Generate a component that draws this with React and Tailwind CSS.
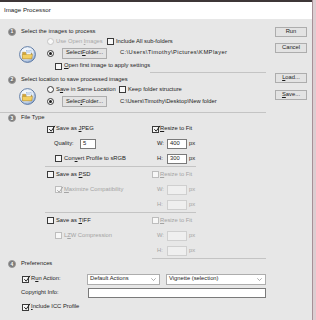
import React from "react";

function Check({ checked = false, disabled = false }) {
  return (
    <span
      className={`relative inline-flex w-[7px] h-[7px] shrink-0 border ${
        disabled ? "border-[#bdbdbd]" : "border-[#3a3a3a]"
      } bg-[#f7f7f7]`}
    >
      {checked && (
        <svg
          viewBox="0 0 8 8"
          className="absolute left-[-0.5px] top-[-1.5px] w-[8px] h-[8px] overflow-visible"
        >
          <path
            d="M1.3 4.2 L3.2 6.2 L7 0.8"
            stroke={disabled ? "#a9a9a9" : "#222"}
            strokeWidth="1"
            fill="none"
          />
        </svg>
      )}
    </span>
  );
}

function Radio({ checked = false, disabled = false }) {
  return (
    <span
      className={`inline-flex items-center justify-center w-[7px] h-[7px] shrink-0 rounded-full border ${
        disabled ? "border-[#c6c6c6]" : "border-[#3a3a3a]"
      } bg-[#f9f9f9]`}
    >
      {checked && <span className="w-[3px] h-[3px] rounded-full bg-[#1e1e1e]" />}
    </span>
  );
}

function Step({ n }) {
  return (
    <span className="flex items-center justify-center w-[8px] h-[8px] shrink-0 rounded-full bg-[#777777] border border-[#9a9a9a] text-white text-[5px] font-bold leading-none">
      {n}
    </span>
  );
}

function Btn({ children, className = "" }) {
  return (
    <span
      className={`flex items-center justify-center border border-[#adadad] bg-[#e3e3e3] leading-none ${className}`}
    >
      {children}
    </span>
  );
}

function FolderIcon({ id }) {
  return (
    <svg width="17" height="17" viewBox="0 0 17 17">
      <defs>
        <radialGradient id={`disc${id}`} cx="40%" cy="35%" r="70%">
          <stop offset="0" stopColor="#ffffff" />
          <stop offset="0.6" stopColor="#e4ecf6" />
          <stop offset="1" stopColor="#7e9dc9" />
        </radialGradient>
      </defs>
      <circle cx="8.5" cy="8.5" r="7.9" fill={`url(#disc${id})`} stroke="#55739f" strokeWidth="0.9" />
      <path d="M3.6 6.2 H6.6 L7.5 7.1 H12.8 V12.6 H3.6 Z" fill="#d7a93a" stroke="#9b7420" strokeWidth="0.4" />
      <rect x="7.2" y="4.2" width="4.8" height="5.2" fill="#ffffff" stroke="#7aa0cf" strokeWidth="0.4" />
      <path d="M8 5.6 H11.2 M8 6.6 H11.2" stroke="#6f9ad0" strokeWidth="0.4" />
      <path d="M3.2 8.4 H13.6 L12.6 12.8 H3.6 Z" fill="#f2cf63" stroke="#a98222" strokeWidth="0.4" />
    </svg>
  );
}

function Field({ value = "", disabled = false, className = "" }) {
  return (
    <span
      className={`flex items-center h-[10px] px-[2px] border leading-none ${
        disabled ? "border-[#cfcfcf] bg-[#efefef]" : "border-[#7a7a7a] bg-white"
      } ${className}`}
    >
      {value}
    </span>
  );
}

function Select({ value, className = "" }) {
  return (
    <span
      className={`flex items-center justify-between h-[11px] pl-[2px] pr-[3px] border border-[#adadad] bg-white leading-none ${className}`}
    >
      <span>{value}</span>
      <svg width="5" height="3" viewBox="0 0 5 3">
        <path d="M0.3 0.3 L2.5 2.5 L4.7 0.3" stroke="#777" strokeWidth="0.6" fill="none" />
      </svg>
    </span>
  );
}

function SizeRow({ label, value, disabled }) {
  return (
    <div className="flex items-center pl-[5px]">
      <span className={`w-[10px] ${disabled ? "text-[#a3a3a3]" : ""}`}>{label}</span>
      <Field value={value} disabled={disabled} className="w-[20px]" />
      <span className={`ml-[2px] ${disabled ? "text-[#a3a3a3]" : ""}`}>px</span>
    </div>
  );
}

function ResizeRow({ checked, disabled }) {
  return (
    <div className="flex items-center">
      <Check checked={checked} disabled={disabled} />
      <span className={`ml-[1px] ${disabled ? "text-[#a3a3a3]" : ""}`}>
        <span className="underline">R</span>esize to Fit
      </span>
    </div>
  );
}

export default function App() {
  return (
    <div className="w-[316px] h-[320px] flex overflow-hidden bg-[#dccdd1] font-['Liberation_Sans',Arial,sans-serif] text-[5.8px] text-[#1c1c1c] leading-none">
      <div className="w-[312px] flex flex-col border-t-2 border-[#3e3637] bg-[#e7e7e7]">
        {/* title bar */}
        <div className="h-[17px] shrink-0 bg-white flex items-center pl-[4px] text-[6.2px] text-[#222]">
          Image Processor
        </div>

        <div className="flex flex-1">
          {/* left content */}
          <div className="w-[270px] flex flex-col">
            {/* Section 1 */}
            <div className="mt-[8px] h-[9px] flex items-center pl-[8px] gap-[5px]">
              <Step n="1" />
              <span>Select the images to process</span>
            </div>
            <div className="flex pl-[19px]">
              <div className="w-[28px] flex items-center pt-[1px]">
                <FolderIcon id="a" />
              </div>
              <div className="flex flex-col">
                <div className="h-[11px] flex items-center">
                  <Radio disabled />
                  <span className="ml-[2px] w-[51px] text-[#a8a8a8]">
                    Use Open <span className="underline">I</span>mages
                  </span>
                  <Check />
                  <span className="ml-[2px]">Include All sub-folders</span>
                </div>
                <div className="h-[12px] flex items-center">
                  <Radio checked />
                  <Btn className="ml-[8px] w-[45px] h-[11px]">
                    Select <span className="underline">F</span>older...
                  </Btn>
                  <span className="ml-[13px] tracking-[0.4px]">C:\Users\Timothy\Pictures\KMPlayer</span>
                </div>
                <div className="mt-[1px] h-[12px] flex items-center pl-[8px]">
                  <Check />
                  <span className="ml-[2px]">
                    <span className="underline">O</span>pen first image to apply settings
                  </span>
                </div>
              </div>
            </div>
            <div className="ml-[150px] w-[116px] h-px bg-[#c4c4c4]" />

            {/* Section 2 */}
            <div className="mt-[2px] h-[9px] flex items-center pl-[8px] gap-[5px]">
              <Step n="2" />
              <span>Select location to save processed images</span>
            </div>
            <div className="flex pl-[19px]">
              <div className="w-[28px] flex items-center">
                <FolderIcon id="b" />
              </div>
              <div className="flex flex-col">
                <div className="h-[11px] flex items-center">
                  <Radio />
                  <span className="ml-[2px] w-[63px]">
                    S<span className="underline">a</span>ve in Same Location
                  </span>
                  <Check />
                  <span className="ml-[2px]">Keep folder structure</span>
                </div>
                <div className="h-[13px] flex items-center">
                  <Radio checked />
                  <Btn className="ml-[8px] w-[45px] h-[11px]">
                    Selec<span className="underline">t</span> Folder...
                  </Btn>
                  <span className="ml-[13px]">C:\Users\Timothy\Desktop\New folder</span>
                </div>
              </div>
            </div>
            <div className="mt-[4px] w-[266px] h-px bg-[#c4c4c4]" />

            {/* Section 3 */}
            <div className="mt-[1px] h-[8px] flex items-center pl-[8px] gap-[5px]">
              <Step n="3" />
              <span>File Type</span>
            </div>
            <div className="pl-[45px] flex flex-col w-[196px]">
              <div className="h-[14px] flex items-center">
                <div className="w-[107px] flex items-center pl-[2px]">
                  <Check checked />
                  <span className="ml-[2px]">
                    Save as <span className="underline">J</span>PEG
                  </span>
                </div>
                <ResizeRow checked />
              </div>
              <div className="h-[15px] flex items-center">
                <div className="w-[107px] flex items-center pl-[9px]">
                  <span className="w-[26px]">Quality:</span>
                  <Field value="5" className="w-[16px]" />
                </div>
                <SizeRow label="W:" value="400" />
              </div>
              <div className="h-[15px] flex items-center">
                <div className="w-[107px] flex items-center pl-[10px]">
                  <Check />
                  <span className="ml-[2px]">
                    Con<span className="underline">v</span>ert Profile to sRGB
                  </span>
                </div>
                <SizeRow label="H:" value="300" />
              </div>
              <div className="h-px bg-[#c4c4c4]" />
              <div className="h-[15px] flex items-center">
                <div className="w-[107px] flex items-center pl-[2px]">
                  <Check />
                  <span className="ml-[2px]">
                    Save as <span className="underline">P</span>SD
                  </span>
                </div>
                <ResizeRow disabled />
              </div>
              <div className="h-[15px] flex items-center">
                <div className="w-[107px] flex items-center pl-[10px]">
                  <Check checked disabled />
                  <span className="ml-[2px] text-[#a3a3a3]">
                    <span className="underline">M</span>aximize Compatibility
                  </span>
                </div>
                <SizeRow label="W:" value="" disabled />
              </div>
              <div className="h-[15px] flex items-center">
                <div className="w-[107px]" />
                <SizeRow label="H:" value="" disabled />
              </div>
              <div className="h-px bg-[#c4c4c4]" />
              <div className="h-[15px] flex items-center">
                <div className="w-[107px] flex items-center pl-[2px]">
                  <Check />
                  <span className="ml-[2px]">
                    Save as <span className="underline">T</span>IFF
                  </span>
                </div>
                <ResizeRow disabled />
              </div>
              <div className="h-[15px] flex items-center">
                <div className="w-[107px] flex items-center pl-[10px]">
                  <Check disabled />
                  <span className="ml-[2px] text-[#a3a3a3]">
                    L<span className="underline">Z</span>W Compression
                  </span>
                </div>
                <SizeRow label="W:" value="" disabled />
              </div>
              <div className="h-[15px] flex items-center">
                <div className="w-[107px]" />
                <SizeRow label="H:" value="" disabled />
              </div>
            </div>
            <div className="ml-[152px] w-[114px] h-px bg-[#c4c4c4]" />

            {/* Section 4 */}
            <div className="mt-[1px] h-[8px] flex items-center pl-[8px] gap-[5px]">
              <Step n="4" />
              <span>Preferences</span>
            </div>
            <div className="mt-[4px] h-[14px] flex items-center pl-[22px]">
              <Check checked />
              <span className="ml-[2px] w-[56px]">
                R<span className="underline">u</span>n Action:
              </span>
              <Select value="Default Actions" className="w-[73px]" />
              <Select value="Vignette (selection)" className="ml-[6px] w-[100px]" />
            </div>
            <div className="h-[14px] flex items-center pl-[21px]">
              <span className="w-[67px]">Copyright Info:</span>
              <Field value="" className="w-[178px]" />
            </div>
            <div className="h-[14px] flex items-center pl-[22px]">
              <Check checked />
              <span className="ml-[2px]">
                <span className="underline">I</span>nclude ICC Profile
              </span>
            </div>
          </div>

          {/* right buttons */}
          <div className="flex flex-col pl-[5px] pt-[8px]">
            <Btn className="w-[32px] h-[10px]">Run</Btn>
            <Btn className="mt-[6px] w-[32px] h-[10px]">Cancel</Btn>
            <Btn className="mt-[20px] w-[32px] h-[10px]">
              <span className="underline">L</span>oad...
            </Btn>
            <Btn className="mt-[7px] w-[32px] h-[10px]">
              <span className="underline">S</span>ave...
            </Btn>
          </div>
        </div>
      </div>
      <div className="w-px bg-[#a88f96]" />
      <div className="flex-1 bg-[#dccdd1]" />
    </div>
  );
}
